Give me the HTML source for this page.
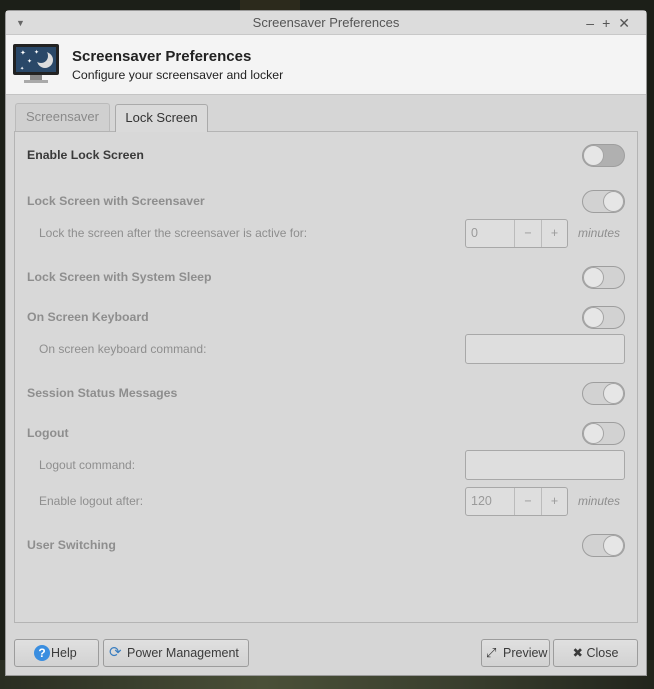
<!DOCTYPE html>
<html><head><style>
*{box-sizing:border-box;margin:0;padding:0}
body{width:654px;height:689px;background:#1c1f18;position:relative;overflow:hidden;font-family:"Liberation Sans",sans-serif;font-size:13px;color:#3c3c3c}
.bg1{position:absolute;left:0;top:660px;width:654px;height:29px;background:linear-gradient(90deg,#2a2e22,#4a5038 40%,#3a3f2e 70%,#22251c)}
.bg2{position:absolute;left:240px;top:0;width:60px;height:12px;background:#2c2a1c}
.win{position:absolute;left:5px;top:10px;width:642px;height:666px;background:#d6d6d6;border:1px solid #9a9a9a;border-radius:4px 4px 0 0}
.title{height:24px;background:#dcdcdc;border-bottom:1px solid #c8c8c8;text-align:center;line-height:24px;font-size:13px;color:#555;position:relative}
.hdr{position:absolute;left:0;top:24px;width:640px;height:60px;background:#f4f4f4;border-bottom:1px solid #c4c4c4}
.abs{position:absolute}
.lbl{position:absolute;font-size:12.3px;color:#8e8e8e;font-weight:bold}
.sub{position:absolute;font-size:12px;color:#8e8e8e}
.tog{position:absolute;left:576px;width:43px;height:23px;border:1px solid #9e9e9e;border-radius:12px;background:#d2d2d2}
.tog i{position:absolute;top:0;width:21px;height:21px;border-radius:50%;background:#e6e6e6;border:1px solid #a4a4a4}
.inp{position:absolute;left:459px;width:160px;height:30px;border:1px solid #a8a8a8;border-radius:3px;background:#dedede}
.spin{position:absolute;left:459px;width:103px;height:29px;border:1px solid #a8a8a8;border-radius:3px;background:#dedede;font-size:12.5px;color:#9a9a9a}
.btn{position:absolute;top:628px;height:28px;border:1px solid #9c9c9c;border-radius:3px;background:linear-gradient(#e0e0e0,#d2d2d2);font-size:12.5px;color:#3a3a3a;line-height:26px}
.min{position:absolute;left:572px;font-size:12px;font-style:italic;color:#8e8e8e}
</style></head><body>
<div class="bg1"></div><div class="bg2"></div>
<div class="win">
<div class="title"><span style="position:absolute;left:10px;top:0;font-size:9px;color:#666">▼</span>Screensaver Preferences
<span style="position:absolute;right:8px;top:0;font-size:14px;color:#555;letter-spacing:8px">–+✕</span></div>
<div class="hdr">
<svg class="abs" style="left:6px;top:8px" width="50" height="42"><rect x="1" y="1" width="46" height="31" rx="2" fill="#222"/><rect x="4" y="4" width="40" height="25" fill="#2a4868"/><circle cx="33" cy="17" r="8" fill="#ddd"/><circle cx="29" cy="13" r="7" fill="#2a4868"/><text x="8" y="12" fill="#fff" font-size="7">✦</text><text x="15" y="20" fill="#fff" font-size="6">✦</text><text x="22" y="11" fill="#fff" font-size="6">✦</text><text x="8" y="27" fill="#fff" font-size="5">✦</text><rect x="18" y="32" width="12" height="5" fill="#888"/><rect x="12" y="37" width="24" height="3" fill="#aaa"/></svg>
<div class="abs" style="left:66px;top:13px;font-size:15px;font-weight:bold;color:#222">Screensaver Preferences</div>
<div class="abs" style="left:66px;top:33px;font-size:12.3px;color:#222">Configure your screensaver and locker</div>
</div>
<div class="abs" style="left:9px;top:92px;width:95px;height:28px;border:1px solid #bbb;border-bottom:none;border-radius:3px 3px 0 0;background:#d0d0d0;color:#8a8a8a;text-align:center;line-height:26px">Screensaver</div>
<div class="abs" style="left:109px;top:93px;width:93px;height:28px;border:1px solid #aaa;border-bottom:none;border-radius:3px 3px 0 0;background:#dadada;color:#333;text-align:center;line-height:26px;z-index:2">Lock Screen</div>
<div class="abs" style="left:8px;top:120px;width:624px;height:492px;border:1px solid #b4b4b4;background:#d8d8d8"></div>
<div class="lbl" style="left:21px;top:137px;color:#3a3a3a">Enable Lock Screen</div>
<div class="tog" style="top:133px;background:#b0b0b0"><i style="left:0"></i></div>
<div class="lbl" style="left:21px;top:183px">Lock Screen with Screensaver</div>
<div class="tog" style="top:179px"><i style="right:0"></i></div>
<div class="sub" style="left:33px;top:215px">Lock the screen after the screensaver is active for:</div>
<div class="spin" style="top:208px"><span style="position:absolute;left:5px;top:6px">0</span><span style="position:absolute;left:48px;top:0;width:27px;height:27px;border-left:1px solid #bbb;text-align:center;line-height:27px">−</span><span style="position:absolute;left:75px;top:0;width:26px;height:27px;border-left:1px solid #bbb;text-align:center;line-height:27px">+</span></div>
<div class="min" style="top:215px">minutes</div>
<div class="lbl" style="left:21px;top:259px">Lock Screen with System Sleep</div>
<div class="tog" style="top:255px"><i style="left:0"></i></div>
<div class="lbl" style="left:21px;top:299px">On Screen Keyboard</div>
<div class="tog" style="top:295px"><i style="left:0"></i></div>
<div class="sub" style="left:33px;top:331px">On screen keyboard command:</div>
<div class="inp" style="top:323px"></div>
<div class="lbl" style="left:21px;top:375px">Session Status Messages</div>
<div class="tog" style="top:371px"><i style="right:0"></i></div>
<div class="lbl" style="left:21px;top:415px">Logout</div>
<div class="tog" style="top:411px"><i style="left:0"></i></div>
<div class="sub" style="left:33px;top:447px">Logout command:</div>
<div class="inp" style="top:439px"></div>
<div class="sub" style="left:33px;top:483px">Enable logout after:</div>
<div class="spin" style="top:476px"><span style="position:absolute;left:5px;top:6px">120</span><span style="position:absolute;left:48px;top:0;width:27px;height:27px;border-left:1px solid #bbb;text-align:center;line-height:27px">−</span><span style="position:absolute;left:75px;top:0;width:26px;height:27px;border-left:1px solid #bbb;text-align:center;line-height:27px">+</span></div>
<div class="min" style="top:483px">minutes</div>
<div class="lbl" style="left:21px;top:527px">User Switching</div>
<div class="tog" style="top:523px"><i style="right:0"></i></div>
<div class="btn" style="left:8px;width:85px"><span style="position:absolute;left:19px;top:5px;width:16px;height:16px;border-radius:50%;background:#3a8ee0;color:#fff;font-size:12px;line-height:16px;text-align:center;font-weight:bold">?</span><span style="position:absolute;left:36px">Help</span></div>
<div class="btn" style="left:97px;width:146px"><span style="position:absolute;left:5px;top:0;color:#3a7ec0;font-size:15px">⟳</span><span style="position:absolute;left:23px">Power Management</span></div>
<div class="btn" style="left:475px;width:69px"><span style="position:absolute;left:4px;top:0;font-size:13px">⤢</span><span style="position:absolute;left:21px">Preview</span></div>
<div class="btn" style="left:547px;width:85px;text-align:center">✖ Close</div>
</div>
</body></html>
